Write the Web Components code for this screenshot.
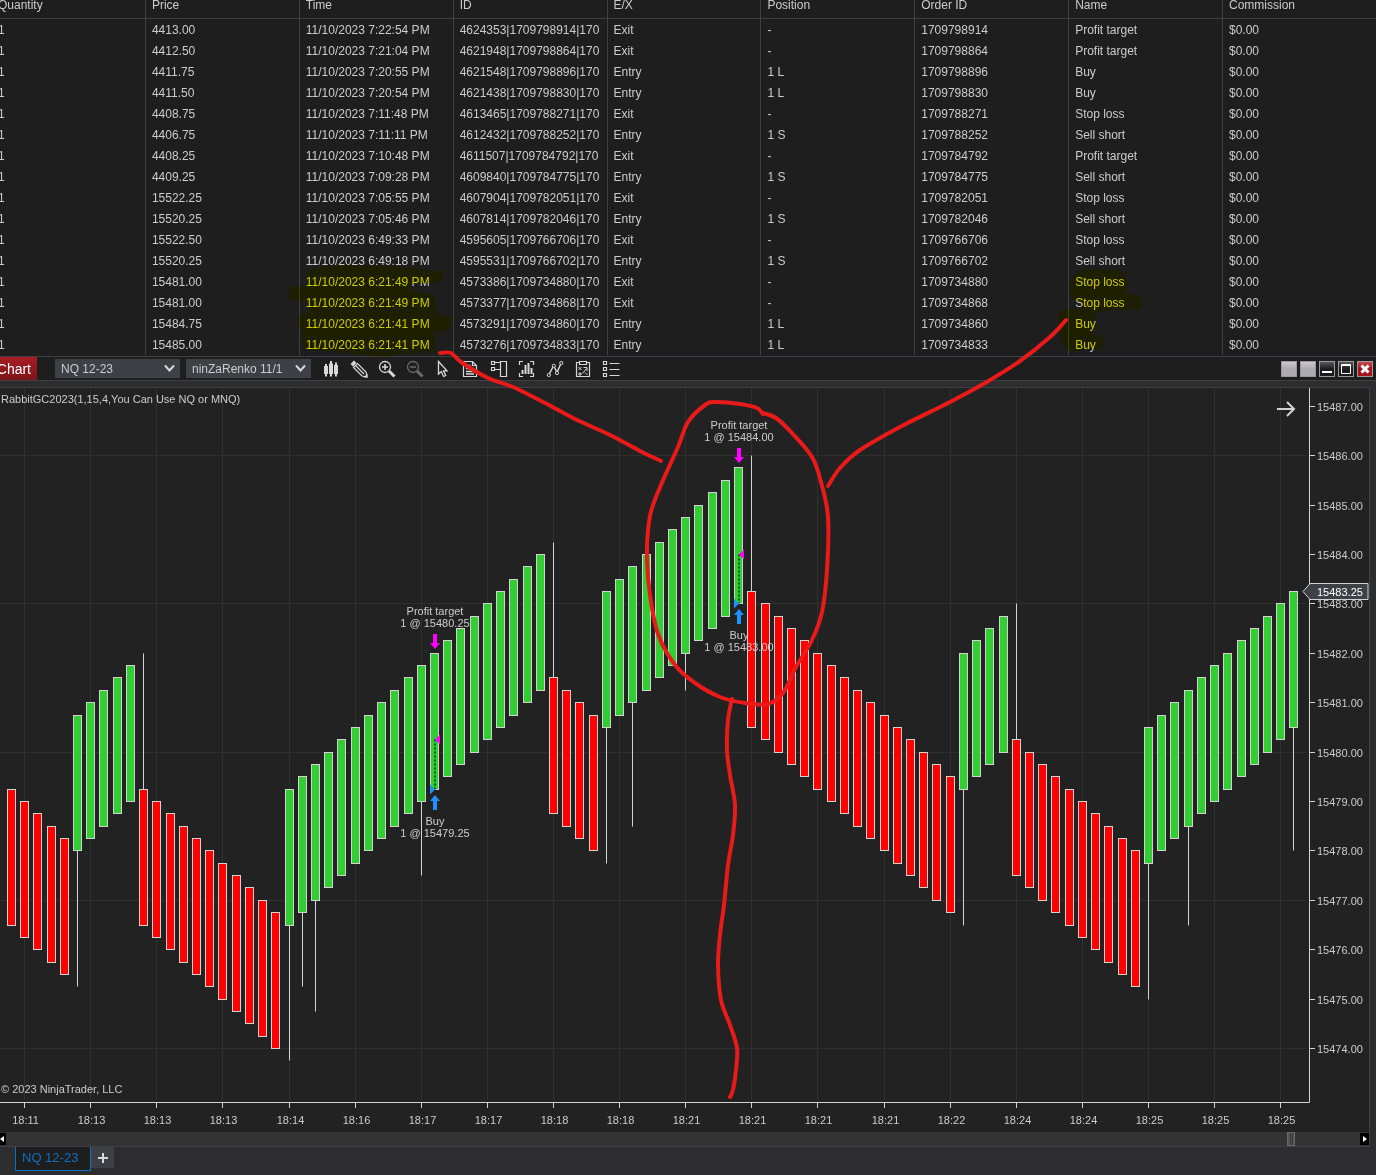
<!DOCTYPE html>
<html lang="en">
<head>
<meta charset="utf-8">
<title>NQ 12-23 - Chart</title>
<style>
  html, body { margin: 0; height: 100%; background: #2d2d30; }
  body { overflow: hidden; }
</style>
</head>
<body>
<trade-desk></trade-desk>

<script>
const sheet = (html) => {
  const t = document.createElement("template");
  t.innerHTML = html;
  return t;
};

class BaseElement extends HTMLElement {
  constructor() {
    super();
    this.attachShadow({ mode: "open" });
    this.shadowRoot.appendChild(this.constructor.template.content.cloneNode(true));
  }
}

/* ---------- executions table ---------- */

const COLUMNS = ["Quantity", "Price", "Time", "ID", "E/X", "Position", "Order ID", "Name", "Commission"];

const EXECUTIONS = [
  ["4413.00", "7:22:54", "4624353|1709798914|170", "Exit", "-", "1709798914", "Profit target"],
  ["4412.50", "7:21:04", "4621948|1709798864|170", "Exit", "-", "1709798864", "Profit target"],
  ["4411.75", "7:20:55", "4621548|1709798896|170", "Entry", "1 L", "1709798896", "Buy"],
  ["4411.50", "7:20:54", "4621438|1709798830|170", "Entry", "1 L", "1709798830", "Buy"],
  ["4408.75", "7:11:48", "4613465|1709788271|170", "Exit", "-", "1709788271", "Stop loss"],
  ["4406.75", "7:11:11", "4612432|1709788252|170", "Entry", "1 S", "1709788252", "Sell short"],
  ["4408.25", "7:10:48", "4611507|1709784792|170", "Exit", "-", "1709784792", "Profit target"],
  ["4409.25", "7:09:28", "4609840|1709784775|170", "Entry", "1 S", "1709784775", "Sell short"],
  ["15522.25", "7:05:55", "4607904|1709782051|170", "Exit", "-", "1709782051", "Stop loss"],
  ["15520.25", "7:05:46", "4607814|1709782046|170", "Entry", "1 S", "1709782046", "Sell short"],
  ["15522.50", "6:49:33", "4595605|1709766706|170", "Exit", "-", "1709766706", "Stop loss"],
  ["15520.25", "6:49:18", "4595531|1709766702|170", "Entry", "1 S", "1709766702", "Sell short"],
  ["15481.00", "6:21:49", "4573386|1709734880|170", "Exit", "-", "1709734880", "Stop loss"],
  ["15481.00", "6:21:49", "4573377|1709734868|170", "Exit", "-", "1709734868", "Stop loss"],
  ["15484.75", "6:21:41", "4573291|1709734860|170", "Entry", "1 L", "1709734860", "Buy"],
  ["15485.00", "6:21:41", "4573276|1709734833|170", "Entry", "1 L", "1709734833", "Buy"]
];

class ExecutionsGrid extends BaseElement {
  static template = sheet(`
    <style>
      :host {
        display: block;
        overflow: hidden;
        background: #1e1e1e;
        border-bottom: 1px solid #3f3f46;
        padding-bottom: 1px;
      }
      /* scrolled a little to the right, so the first column is cut */
      table {
        width: calc(100% + 9px);
        margin-left: -8px;
        table-layout: fixed;
        border-collapse: separate;
        border-spacing: 0;
        font-size: 12px;
        color: #cccccc;
      }
      th, td {
        padding: 0 6px;
        text-align: left;
        font-weight: normal;
        border-right: 1px solid #3f3f42;
      }
      th:last-child, td:last-child { border-right: 0; }
      th {
        height: 10px;
        line-height: 10px;
        padding-bottom: 8px;
        border-bottom: 1px solid #3f3f42;
      }
      td { height: 21px; }
      span { display: block; height: 21px; line-height: 23px; overflow: hidden; white-space: nowrap; }
    </style>
    <table>
      <thead><tr></tr></thead>
      <tbody></tbody>
    </table>
  `);

  connectedCallback() {
    this.shadowRoot.querySelector("thead tr").innerHTML =
      COLUMNS.map((c) => `<th scope="col">${c}</th>`).join("");
    this.shadowRoot.querySelector("tbody").innerHTML = EXECUTIONS.map(
      ([price, time, id, ex, pos, order, name]) => {
        const cells = ["1", price, `11/10/2023 ${time} PM`, id, ex, pos, order, name, "$0.00"];
        return `<tr>${cells.map((c) => `<td><span>${c}</span></td>`).join("")}</tr>`;
      }
    ).join("");
  }
}

/* ---------- toolbar parts ---------- */

class ToolSelect extends BaseElement {
  static template = sheet(`
    <style>
      :host { display: block; position: relative; width: 125px; }
      select {
        appearance: none;
        display: block;
        width: 100%;
        height: 19px;
        margin: 0;
        padding: 0 20px 0 6px;
        border: 0;
        border-radius: 0;
        background: #3f3f46;
        color: #cccccc;
        font: inherit;
        font-size: 12px;
      }
      svg { position: absolute; right: 5px; top: 5px; pointer-events: none; }
    </style>
    <select><option></option></select>
    <svg width="11" height="9" viewBox="0 0 11 9" fill="none" stroke="#d8d8d8" stroke-width="2">
      <path d="M1 1.5L5.5 6.5L10 1.5"/>
    </svg>
  `);

  connectedCallback() {
    const select = this.shadowRoot.querySelector("select");
    select.setAttribute("aria-label", this.getAttribute("label"));
    select.options[0].textContent = this.getAttribute("value");
  }
}

class ToolButton extends BaseElement {
  static template = sheet(`
    <style>
      :host { display: block; color: #d8d8d8; }
      :host([disabled]) { color: #6a6a6a; }
      button {
        display: flex;
        align-items: center;
        justify-content: center;
        width: 28px;
        height: 21px;
        padding: 0;
        border: 0;
        background: none;
        color: inherit;
      }
    </style>
    <button type="button"><slot></slot></button>
  `);

  connectedCallback() {
    const button = this.shadowRoot.querySelector("button");
    button.setAttribute("aria-label", this.getAttribute("label"));
    button.disabled = this.hasAttribute("disabled");
  }
}

class WindowButton extends BaseElement {
  static template = sheet(`
    <style>
      :host { display: block; }
      button {
        display: flex;
        box-sizing: border-box;
        width: 16px;
        height: 16px;
        padding: 0;
        border: 1px solid #9a9a9c;
        background: linear-gradient(#c9c8ca, #aeabae 50%);
      }
      :host([kind="dark"]) button { background: linear-gradient(#58585c, #1c1c1e 50%); }
      :host([kind="close"]) button { background: linear-gradient(#c44a4e, #a5141c 50%); }
    </style>
    <button type="button"><slot></slot></button>
  `);

  connectedCallback() {
    this.shadowRoot.querySelector("button").setAttribute("aria-label", this.getAttribute("label"));
  }
}

class ChartToolbar extends BaseElement {
  static template = sheet(`
    <style>
      :host {
        display: flex;
        align-items: center;
        height: 23px;
        background: #1e1e1e;
        border-bottom: 1px solid #3f3f46;
      }
      .menu {
        display: flex;
        align-items: center;
        justify-content: flex-end;
        align-self: stretch;
        width: 37px;
        margin-right: 18px;
        padding: 0 6px 0 0;
        border: 0;
        background: linear-gradient(#a81c24, #7c141a);
        color: #fff;
        font: inherit;
        font-size: 14px;
        white-space: nowrap;
      }
      .fields { display: flex; gap: 6px; margin-right: 6px; }
      .tools { display: flex; flex: 1; }
      .window { display: flex; gap: 3px; margin-right: 3px; }
      .tools svg { width: 20px; height: 20px; fill: none; stroke: currentColor; }
    </style>
    <button class="menu" type="button">Chart</button>
    <div class="fields">
      <tool-select label="Instrument" value="NQ 12-23"></tool-select>
      <tool-select label="Interval" value="ninZaRenko 11/1"></tool-select>
    </div>
    <div class="tools">
      <tool-button label="Chart style">
        <svg viewBox="0 0 20 20"><path d="M5 5V17.5M10 2V17.5M15 3.5V17.5" stroke-width="2"/><path d="M5 7V15M10 4.500V15M15 6V15" stroke-width="4"/></svg>
      </tool-button>
      <tool-button label="Drawing tools">
        <svg viewBox="0 0 20 20"><path d="M1.500 5L5 1.500L7.500 4L4 7.500Z" fill="currentColor" stroke="none"/><path d="M4.500 8.500L8.500 4.500L17 13L18 18L13 17ZM6.500 6.500L15 15" stroke-width="1.200"/><path d="M14.500 18.500L18.500 14.500V18.500Z" fill="currentColor" stroke="none"/></svg>
      </tool-button>
      <tool-button label="Zoom in">
        <svg viewBox="0 0 20 20"><circle cx="8" cy="8" r="5.500" stroke-width="1.300"/><path d="M5 8H11M8 5V11" stroke-width="1.500"/><path d="M12 12L17.500 17.500" stroke-width="3"/></svg>
      </tool-button>
      <tool-button label="Zoom out" disabled>
        <svg viewBox="0 0 20 20"><circle cx="8" cy="8" r="5.500" stroke-width="1.300"/><path d="M5 8H11" stroke-width="1.500"/><path d="M12 12L17.500 17.500" stroke-width="3"/></svg>
      </tool-button>
      <tool-button label="Cursor">
        <svg viewBox="0 0 20 20"><path d="M5.500 2.500V15L8.300 12.500L10.500 17.500L12.700 16.500L10.500 11.800H14Z" stroke-width="1.300"/></svg>
      </tool-button>
      <tool-button label="Properties">
        <svg viewBox="0 0 20 20"><path d="M2.500 2.500H11.500L15.500 6.500V17.500H2.500ZM11.500 2.500V6.500H15.500" stroke-width="1.200"/><path d="M5 6.500H9.500M5 9.500H13M5 12.500H13M5 15H13" stroke-width="1.500"/></svg>
      </tool-button>
      <tool-button label="Chart trader">
        <svg viewBox="0 0 20 20"><path d="M2.500 2.500H5.500V5.500H2.500ZM2.500 8.500H5.500V11.500H2.500ZM5.500 3.500H11.500M5.500 10.500H11.500" stroke-width="1.200"/><path d="M11.500 2.500H17.500V17.500H11.500Z" stroke-width="1.200"/></svg>
      </tool-button>
      <tool-button label="Data series">
        <svg viewBox="0 0 20 20"><path d="M6 2.500H2.500V6M13 2.500H16.500V6M2.500 14V17.500H6M16.500 14V17.500H13" stroke-width="1.200"/><path d="M5.500 11V15M8.500 6V15M11.500 4V15M14.500 9V15" stroke-width="2"/></svg>
      </tool-button>
      <tool-button label="Indicators">
        <svg viewBox="0 0 20 20"><path d="M4.500 14.500L8 8M9.700 8.500L11.500 12.500M12.500 12.300L15.500 5.500" stroke-width="1.500"/><circle cx="3.800" cy="16" r="1.600"/><circle cx="8.800" cy="6.800" r="1.600"/><circle cx="12" cy="14" r="1.600"/><circle cx="16.300" cy="4" r="1.600"/></svg>
      </tool-button>
      <tool-button label="Strategies">
        <svg viewBox="0 0 20 20"><path d="M6.500 3.500H3.500V17.500H16.500V3.500H13.500M6.500 2.500H13.500V5.500H6.500Z" stroke-width="1.200"/><path d="M5.500 8L8.500 11M8.500 8L5.500 11M9.500 14.500L13.500 9.500M10.500 8.500H14V12M6 14H8V16H6ZM12 13.500L14.500 16"/></svg>
      </tool-button>
      <tool-button label="Templates">
        <svg viewBox="0 0 20 20"><path d="M2.500 2.500H5.500V5.500H2.500ZM2.500 8.500H5.500V11.500H2.500ZM2.500 14.500H5.500V17.500H2.500ZM8.500 4.500H18.500M8.500 10.500H18.500M8.500 16.500H18.500" stroke-width="1.200"/></svg>
      </tool-button>
    </div>
    <div class="window">
      <window-button label="Link instrument"></window-button>
      <window-button label="Link interval"></window-button>
      <window-button kind="dark" label="Minimize">
        <svg width="14" height="14"><path d="M2 9h10v2H2z" fill="#fff"/></svg>
      </window-button>
      <window-button kind="dark" label="Maximize">
        <svg width="14" height="14"><path d="M2.500 2.500h9v9h-9zM2 3.500h10" fill="none" stroke="#fff"/></svg>
      </window-button>
      <window-button kind="close" label="Close">
        <svg width="14" height="14"><path d="M3.500 3.500l7 7M10.500 3.500l-7 7" stroke="#fff" stroke-width="3"/></svg>
      </window-button>
    </div>
  `);
}

/* ---------- chart ---------- */

const MAX_PRICE = 15487.358;
const MIN_PRICE = 15472.908;
const TICK = 0.25;
const BODY = 11 * TICK;

// runs of bricks: direction, number of bricks, top price of the first one,
// and the wicks as { brick: price }
const RUNS = [
  { dir: -1, count: 5, top: 15479.25, wicks: {} },
  { dir: 1, count: 5, top: 15480.75, wicks: { 0: 15475.25 } },
  { dir: -1, count: 11, top: 15479.25, wicks: { 0: 15482 } },
  { dir: 1, count: 20, top: 15479.25, wicks: { 0: 15473.75, 1: 15475.25, 2: 15474.75, 10: 15477.5 } },
  { dir: -1, count: 4, top: 15481.5, wicks: { 0: 15484.25 } },
  { dir: 1, count: 11, top: 15483.25, wicks: { 0: 15477.75, 2: 15478.5, 6: 15481.25 } },
  { dir: -1, count: 16, top: 15483.25, wicks: { 0: 15486 } },
  { dir: 1, count: 4, top: 15482, wicks: { 0: 15476.5 } },
  { dir: -1, count: 10, top: 15480.25, wicks: { 0: 15483 } },
  { dir: 1, count: 12, top: 15480.5, wicks: { 0: 15475, 3: 15476.5, 11: 15478 } }
];

const BRICKS = RUNS.flatMap(({ dir, count, top, wicks }) =>
  Array.from({ length: count }, (_, i) => ({ dir, top: top + dir * i * TICK, wick: wicks[i] }))
);

const TRADES = [
  { brick: 32, buy: 15479.25, sell: 15480.25 },
  { brick: 55, buy: 15483, sell: 15484 }
];

const TIMES = ["18:11", "18:13", "18:13", "18:13", "18:14", "18:16", "18:17", "18:17", "18:18", "18:18",
  "18:21", "18:21", "18:21", "18:21", "18:22", "18:24", "18:24", "18:25", "18:25", "18:25"];

class PriceChart extends BaseElement {
  static template = sheet(`
    <style>
      :host {
        display: block;
        min-height: 0;
        overflow: hidden;
        background: #222222;
        border-top: 1px solid #3f3f46;
        border-right: 1px solid #3f3f46;
      }
      svg { display: block; width: 100%; height: 100%; }
      text { font-size: 11px; fill: #cccccc; }
      .mid { text-anchor: middle; }
      .last { fill: #ffffff; }
      .grid { stroke: #303030; }
      .axis { stroke: #d3d3d3; fill: none; }
      .wick { stroke: #d3d3d3; }
      .up { fill: #32cd32; stroke: #d3d3d3; }
      .down { fill: #ff0000; stroke: #d3d3d3; }
    </style>
    <svg role="img" aria-label="NQ 12-23 price chart"></svg>
  `);

  connectedCallback() {
    this._ro = new ResizeObserver(() => this._draw());
    this._ro.observe(this);
    this._draw();
  }

  disconnectedCallback() {
    this._ro.disconnect();
  }

  _draw() {
    const w = this.clientWidth;
    const h = this.clientHeight;
    if (!w || !h) return;

    const plotW = w - 60;
    const plotH = h - 30;
    const step = plotW / 99;
    const x = (i) => Math.round((i + 0.82) * step) + 0.5;
    const y = (p) => Math.round(((MAX_PRICE - p) / (MAX_PRICE - MIN_PRICE)) * plotH) + 0.5;
    const out = [];

    // grid
    TIMES.forEach((_, n) => out.push(`<path class="grid" d="M${x(1 + n * 5)} 0V${plotH - 2}"/>`));
    for (let p = 15474; p <= 15486; p += 3) out.push(`<path class="grid" d="M0 ${y(p)}H${plotW - 2}"/>`);

    // axes
    out.push(`<path class="axis" d="M${plotW + 0.5} 0V${plotH + 0.5}H0"/>`);
    TIMES.forEach((t, n) => {
      const tx = x(1 + n * 5);
      out.push(`<path class="axis" d="M${tx} ${plotH}v6"/><text class="mid" x="${tx + 1}" y="${plotH + 22}">${t}</text>`);
    });
    for (let p = 15474; p <= 15487; p++) {
      out.push(`<path class="axis" d="M${plotW} ${y(p)}h6"/><text x="${plotW + 8}" y="${y(p) + 4}">${p.toFixed(2)}</text>`);
    }

    // bricks
    BRICKS.forEach(({ dir, top, wick }, i) => {
      const y1 = y(top);
      const y2 = y(top - BODY);
      if (wick) out.push(`<path class="wick" d="M${x(i)} ${dir > 0 ? y2 : y1}V${y(wick)}"/>`);
      out.push(`<rect class="${dir > 0 ? "up" : "down"}" x="${x(i) - 4}" y="${y1}" width="8" height="${y2 - y1}"/>`);
    });

    TRADES.forEach((t) => out.push(this._trade(t, x, y)));

    // last price flag
    const last = y(15483.25);
    out.push(`
      <path d="M${plotW - 6} ${last}l7 -8h58v16h-58z" fill="#3f3f46" stroke="#d3d3d3"/>
      <text class="last" x="${plotW + 8}" y="${last + 4}">15483.25</text>
      <path d="M${plotW - 32} 21h17M${plotW - 22} 14l7 7l-7 7" fill="none" stroke="#d3d3d3" stroke-width="2"/>
      <text x="1" y="15">RabbitGC2023(1,15,4,You Can Use NQ or MNQ)</text>
      <text x="1" y="${plotH - 9}">© 2023 NinjaTrader, LLC</text>`);

    this.shadowRoot.querySelector("svg").innerHTML = out.join("");
  }

  _trade({ brick, buy, sell }, x, y) {
    const cx = x(brick) + 0.5;
    const top = y(BRICKS[brick].top) - 0.5;
    const bottom = y(BRICKS[brick].top - BODY) - 0.5;
    return `
      <path d="M${cx} ${y(sell)}V${y(buy)}" stroke="#0a5a0a" stroke-width="2" stroke-dasharray="2 2"/>
      <path d="M${cx} ${y(sell)}l5 -5v10z" fill="#ff00ff"/>
      <path d="M${cx} ${y(buy)}l-5 -5v10z" fill="#1e90ff"/>
      <path d="M${cx - 2} ${top - 19}h4v9h3l-5 6l-5 -6h3z" fill="#ff00ff"/>
      <path d="M${cx - 2} ${bottom + 21}h4v-9h3l-5 -6l-5 6h3z" fill="#1e90ff"/>
      <text class="mid" x="${cx}" y="${top - 38}">Profit target</text>
      <text class="mid" x="${cx}" y="${top - 26}">1 @ ${sell.toFixed(2)}</text>
      <text class="mid" x="${cx}" y="${bottom + 36}">Buy</text>
      <text class="mid" x="${cx}" y="${bottom + 48}">1 @ ${buy.toFixed(2)}</text>`;
  }
}

class ChartScroll extends BaseElement {
  static template = sheet(`
    <style>
      :host {
        display: flex;
        align-items: center;
        height: 14px;
        background: #333333;
        border-right: 1px solid #3f3f46;
        border-bottom: 1px solid #3f3f46;
      }
      button {
        display: flex;
        align-items: center;
        justify-content: center;
        width: 9px;
        height: 12px;
        padding: 0;
        border: 0;
        background: #000;
      }
      .back { width: 6px; justify-content: flex-start; }
      input {
        appearance: none;
        flex: 1;
        min-width: 0;
        height: 14px;
        margin: 0;
        background: transparent;
      }
      input::-webkit-slider-thumb {
        appearance: none;
        box-sizing: border-box;
        width: 8px;
        height: 14px;
        border: 1px solid #686868;
        background: linear-gradient(90deg, #555 2px, #333 2px 3px, #555 3px 4px, #333 4px 5px, #555 5px);
      }
    </style>
    <button class="back" type="button" aria-label="Scroll back"><svg width="4" height="6"><path d="M4 0v6L0 3z" fill="#fff"/></svg></button>
    <input type="range" aria-label="Chart position" min="0" max="1000" value="952">
    <button type="button" aria-label="Scroll forward"><svg width="4" height="6"><path d="M0 0v6L4 3z" fill="#fff"/></svg></button>
  `);
}

class ChartTabs extends BaseElement {
  static template = sheet(`
    <style>
      :host { display: flex; align-items: flex-start; height: 28px; padding-left: 15px; }
      button {
        box-sizing: border-box;
        border: 0;
        padding: 0;
        font: inherit;
      }
      .tab {
        width: 76px;
        height: 24px;
        padding: 0 6px 2px;
        text-align: left;
        white-space: nowrap;
        font-size: 13px;
        background: #1e1e1e;
        border: 1px solid #0e70c0;
        border-top: 0;
        color: #0e70c0;
      }
      .add {
        display: flex;
        align-items: center;
        justify-content: center;
        width: 23px;
        height: 21px;
        background: #3f3f46;
      }
    </style>
    <button class="tab" type="button">NQ 12-23</button>
    <button class="add" type="button" aria-label="New tab">
      <svg width="10" height="10"><path d="M0 5h10M5 0v10" stroke="#d8d8d8" stroke-width="2"/></svg>
    </button>
  `);
}

/* ---------- pen and highlighter strokes over the window ---------- */

const PEN = [
  [[440, 353], [451, 353], [461, 362], [488, 378], [513, 387], [545, 403], [575, 419], [610, 435], [640, 451], [661, 461]],
  [[1066, 320], [1050, 337], [1020, 361], [985, 383], [950, 402], [900, 427], [860, 450], [840, 468], [828, 486]],
  [[763, 414], [757, 408], [740, 404], [716, 402], [705, 405], [688, 422], [678, 447], [664, 478], [652, 508], [648, 530],
   [647, 560], [650, 595], [658, 634], [675, 665], [695, 683], [720, 697], [745, 703], [768, 704], [783, 693], [796, 667],
   [812, 640], [822, 612], [827, 570], [828, 517], [821, 482], [812, 457], [792, 433], [776, 418], [763, 413]],
  [[732, 699], [728, 720], [727, 750], [730, 775], [735, 805], [733, 835], [728, 865], [724, 905], [720, 935], [718, 965],
   [721, 1000], [730, 1025], [737, 1048], [736, 1070], [733, 1090], [730, 1097]]
];

// curve through all the points
const curve = (pts) => {
  let d = `M${pts[0]}`;
  for (let i = 0; i < pts.length - 1; i++) {
    const p0 = pts[i - 1] || pts[i];
    const [p1, p2] = [pts[i], pts[i + 1]];
    const p3 = pts[i + 2] || p2;
    d += `C${p1[0] + (p2[0] - p0[0]) / 6} ${p1[1] + (p2[1] - p0[1]) / 6} ` +
      `${p2[0] - (p3[0] - p1[0]) / 6} ${p2[1] - (p3[1] - p1[1]) / 6} ${p2}`;
  }
  return d;
};

class PenMarks extends BaseElement {
  static template = sheet(`
    <style>
      :host { display: contents; }
      svg { position: absolute; left: 0; top: 0; width: 100%; height: 100%; pointer-events: none; }
      .marker { mix-blend-mode: multiply; fill: #ffff00; }
      .pen { fill: none; stroke: #e81a1a; stroke-width: 4; stroke-linecap: round; stroke-linejoin: round; }
    </style>
    <svg class="marker" viewBox="0 0 1376 1175" preserveAspectRatio="none">
      <path d="M306 273Q316 266 345 265Q400 265 432 271L442 271V282L412 284L408 290L434 295V303L437 309V315L451 317V330L435 332V352L408 353Q390 358 372 356L340 352L306 350Q301 346 302 333L304 328L298 327V315L309 312L306 301L289 300V287L306 286Z"/>
      <path d="M1075 273Q1095 267 1118 270Q1126 273 1127 280V293L1141 296V309L1108 310L1094 314L1095 328L1091 334L1103 338V349L1084 349Q1070 354 1065 348L1060 336L1058 318L1060 310L1080 308L1084 304L1070 298L1070 283Z"/>
    </svg>
    <svg class="pen" viewBox="0 0 1376 1175" preserveAspectRatio="none">${PEN.map((p) => `<path d="${curve(p)}"/>`).join("")}</svg>
  `);
}

class TradeDesk extends BaseElement {
  static template = sheet(`
    <style>
      :host {
        display: flex;
        flex-direction: column;
        position: relative;
        height: 100vh;
        background: #2d2d30;
        font-family: "Liberation Sans", Arial, sans-serif;
        color: #cccccc;
      }
      .chart {
        display: flex;
        flex-direction: column;
        flex: 1;
        min-height: 0;
        padding: 6px 6px 0 0;
      }
      price-chart { flex: 1; }
    </style>
    <executions-grid></executions-grid>
    <chart-toolbar></chart-toolbar>
    <div class="chart">
      <price-chart></price-chart>
      <chart-scroll></chart-scroll>
    </div>
    <chart-tabs></chart-tabs>
    <pen-marks></pen-marks>
  `);
}

customElements.define("executions-grid", ExecutionsGrid);
customElements.define("tool-select", ToolSelect);
customElements.define("tool-button", ToolButton);
customElements.define("window-button", WindowButton);
customElements.define("chart-toolbar", ChartToolbar);
customElements.define("price-chart", PriceChart);
customElements.define("chart-scroll", ChartScroll);
customElements.define("chart-tabs", ChartTabs);
customElements.define("pen-marks", PenMarks);
customElements.define("trade-desk", TradeDesk);
</script>
</body>
</html>
